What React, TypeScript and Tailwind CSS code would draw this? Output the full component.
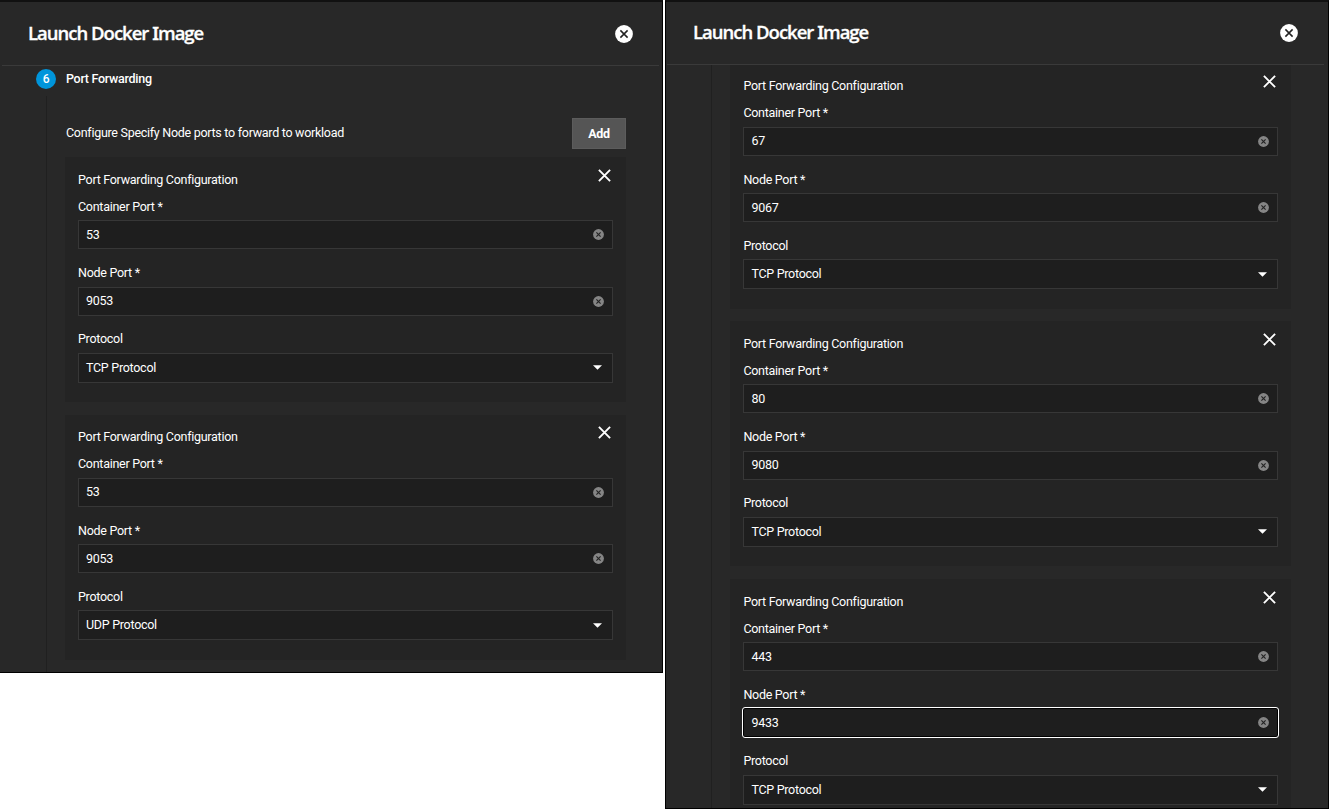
type PortConfig = { container: string; node: string; protocol: string; focused?: boolean };

const leftConfigs: PortConfig[] = [
  { container: '53', node: '9053', protocol: 'TCP Protocol' },
  { container: '53', node: '9053', protocol: 'UDP Protocol' },
];

const rightConfigs: PortConfig[] = [
  { container: '67', node: '9067', protocol: 'TCP Protocol' },
  { container: '80', node: '9080', protocol: 'TCP Protocol' },
  { container: '443', node: '9433', protocol: 'TCP Protocol', focused: true },
];

function ClearIcon() {
  return (
    <svg className="h-[11px] w-[11px] shrink-0" viewBox="0 0 11 11">
      <circle cx="5.5" cy="5.5" r="5.4" fill="#858585" />
      <path d="M3.4 3.4l4.2 4.2M7.6 3.4l-4.2 4.2" stroke="#222" strokeWidth="1.1" />
    </svg>
  );
}

function CloseDialogIcon() {
  return (
    <svg className="h-[18px] w-[18px]" viewBox="0 0 18 18">
      <circle cx="9" cy="9" r="8.9" fill="#fff" />
      <path d="M5.4 5.4l7.2 7.2M12.6 5.4l-7.2 7.2" stroke="#222" strokeWidth="1.5" />
    </svg>
  );
}

function RemoveIcon() {
  return (
    <svg className="h-[13px] w-[13px]" viewBox="0 0 13 13">
      <path d="M0.9 0.9l11.2 11.2M12.1 0.9L0.9 12.1" stroke="#fff" strokeWidth="1.9" />
    </svg>
  );
}

function CaretIcon() {
  return (
    <svg className="h-[5px] w-[9px]" viewBox="0 0 9 5">
      <path d="M0 0.2h9L4.5 4.8z" fill="#fff" />
    </svg>
  );
}

function Label({ text }: { text: string }) {
  return <div className="flex h-[27px] items-center">{text}</div>;
}

function TextField({ label, value, focused }: { label: string; value: string; focused?: boolean }) {
  return (
    <div className="h-[66.25px]">
      <Label text={label} />
      <div
        className={
          focused
            ? 'flex h-[29px] items-center justify-between rounded-[2px] border border-black bg-[#1e1e1e] pr-[8px] pl-[7px] outline outline-1 outline-white'
            : 'flex h-[29px] items-center justify-between border border-[#373737] bg-[#1e1e1e] pr-[8px] pl-[7px]'
        }
      >
        <span>{value}</span>
        <ClearIcon />
      </div>
    </div>
  );
}

function ConfigCard({ config }: { config: PortConfig }) {
  return (
    <section className="mb-[12.7px] h-[245px] w-[561px] shrink-0 bg-[#242424] pr-[13px] pl-[13px]">
      <div className="flex h-[36.3px] items-center justify-between pr-[2px]">
        <h3 className="pt-[9px]">Port Forwarding Configuration</h3>
        <RemoveIcon />
      </div>
      <TextField label="Container Port *" value={config.container} />
      <TextField label="Node Port *" value={config.node} focused={config.focused} />
      <Label text="Protocol" />
      <div className="flex h-[30px] items-center justify-between border border-[#373737] bg-[#1e1e1e] pr-[10px] pl-[7px]">
        <span>{config.protocol}</span>
        <CaretIcon />
      </div>
    </section>
  );
}

function DialogHeader() {
  return (
    <header className="mr-[3px] ml-[2px] flex h-[63px] shrink-0 items-center justify-between border-b border-[#3a3a3a] pr-[26px] pl-[26px]">
      <h2 className="pb-[2px] font-['Open_Sans'] text-[18.5px] font-semibold tracking-[-1px] whitespace-nowrap text-white [-webkit-text-stroke:0.3px_white]">
        Launch Docker <span className="font-['Noto_Sans']">I</span>mage
      </h2>
      <CloseDialogIcon />
    </header>
  );
}

export default function App() {
  return (
    <main className="flex h-[810px] w-[1330px] items-start gap-[2px] overflow-hidden bg-white font-[Roboto,sans-serif] text-[12.5px] leading-4 tracking-[-0.28px] text-white">
      <div className="flex h-[673px] w-[663px] flex-col overflow-hidden border-t-2 border-r border-b border-t-[#111] border-r-black border-b-black bg-[#282828] pt-[1px]">
        <DialogHeader />
        <div className="flex min-h-0 flex-1">
          <div className="flex w-[65px] shrink-0 flex-col items-center pl-[27px]">
            <div className="mt-[3px] flex h-5 w-5 shrink-0 items-center justify-center rounded-full bg-[#0095db] text-[12px] font-medium">6</div>
            <div className="mt-[7px] w-px flex-1 bg-[#202020]" />
          </div>
          <div className="flex w-[561px] flex-col">
            <h3 className="mt-[4.5px] pl-[1px] font-medium">Port Forwarding</h3>
            <div className="mt-[31.5px] mb-[8px] flex h-[31px] shrink-0 items-center justify-between">
              <p className="pb-[2px] pl-[1px]">Configure Specify Node ports to forward to workload</p>
              <button className="h-[31px] w-[54px] border border-[#5c5c5c] bg-[#555] font-bold">Add</button>
            </div>
            {leftConfigs.map((config, i) => (
              <ConfigCard key={i} config={config} />
            ))}
          </div>
        </div>
      </div>
      <div className="flex h-[809px] w-[664px] flex-col overflow-hidden border-x border-t-2 border-b border-x-black border-t-[#111] border-b-black bg-[#282828]">
        <div className="mr-[1px] -ml-[1px] flex flex-col">
          <DialogHeader />
        </div>
        <div className="flex min-h-0 flex-1 overflow-hidden">
          <div className="flex w-[64.4px] shrink-0 justify-center pl-[27px]">
            <div className="w-px bg-[#202020]" />
          </div>
          <div className="-mt-[1.5px] flex flex-col">
            {rightConfigs.map((config, i) => (
              <ConfigCard key={i} config={config} />
            ))}
          </div>
        </div>
      </div>
    </main>
  );
}
